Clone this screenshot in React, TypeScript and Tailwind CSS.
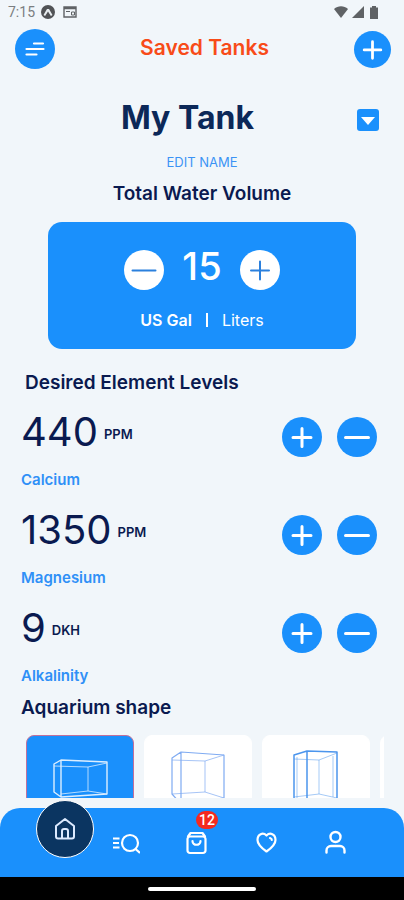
import { useState } from "react";
import type { ReactNode } from "react";

function Plus({ thin = false }: { thin?: boolean }) {
  return (
    <svg viewBox="0 0 40 40" fill="none" stroke="currentColor" strokeWidth={thin ? 2 : 3} strokeLinecap="round" aria-hidden="true">
      <path d="M20 11.500v18M11 20.500h18" />
    </svg>
  );
}

function Minus({ thin = false }: { thin?: boolean }) {
  return (
    <svg viewBox="0 0 40 40" fill="none" stroke="currentColor" strokeWidth={thin ? 2 : 3} strokeLinecap="round" aria-hidden="true">
      <path d="M8.500 20.500h23" />
    </svg>
  );
}

function RoundButton({ label, light = false, onClick, children }: { label: string; light?: boolean; onClick?: () => void; children: ReactNode }) {
  return (
    <button
      type="button"
      aria-label={label}
      onClick={onClick}
      className={`size-10 shrink-0 rounded-full ${light ? "bg-white text-[#2b80dd]" : "bg-[#1a90fc] text-white"}`}
    >
      {children}
    </button>
  );
}

function StatusBar() {
  return (
    <div className="flex h-6 shrink-0 items-center justify-between pr-6 pl-2 text-[#5f6265]">
      <div className="flex items-center gap-1">
        <span className="font-[Roboto,sans-serif] text-[14px] leading-6 text-[#7b7e81]">7:15</span>
        <svg viewBox="0 0 14 14" className="ml-0.5 size-3.5" aria-hidden="true">
          <circle cx="7" cy="7" r="7" fill="#515356" />
          <path d="M2.500 10 6 4h2l3.500 6-1.600 1L7 6.500 4.100 11Z" fill="#e8edf0" />
        </svg>
        <svg viewBox="0 0 14 12" className="ml-1 h-3 w-3.5" fill="none" stroke="currentColor" aria-hidden="true">
          <path d="M1 1h12v10H1zM1 2.500h12" strokeWidth="1.400" />
          <path d="M3 5.500h4M8.500 6h3v3h-3z" />
        </svg>
      </div>
      <div className="flex items-center gap-1">
        <svg viewBox="0 0 14 12" className="h-3 w-3.5" fill="currentColor" aria-hidden="true">
          <path d="M0 3C4-.7 10-.7 14 3L7 12Z" />
        </svg>
        <svg viewBox="0 0 12 12" className="size-3" fill="currentColor" aria-hidden="true">
          <path d="M12 0v12H0Z" />
        </svg>
        <svg viewBox="0 0 12 14" className="h-3.5 w-3" fill="currentColor" aria-hidden="true">
          <path d="M4 1h4v1.500h2V14H2V2.500h2Z" />
        </svg>
      </div>
    </div>
  );
}

function Level({ name, unit, initial }: { name: string; unit: string; initial: number }) {
  const [value, setValue] = useState(initial);
  return (
    <section className="flex h-[98px] items-start justify-between pr-[7px]" aria-label={name}>
      <div className="pl-px">
        <p className="flex items-center gap-1.5">
          <span className="text-[40px] leading-[60px]">{value}</span>
          <span className="pt-1.5 text-[13px] font-semibold">{unit}</span>
        </p>
        <h3 className="mt-2 text-[15px] leading-5 font-semibold text-[#2f90f7]">{name}</h3>
      </div>
      <div className="mt-[15px] flex gap-[15px]">
        <RoundButton label={`Increase ${name}`} onClick={() => setValue(value + 1)}><Plus /></RoundButton>
        <RoundButton label={`Decrease ${name}`} onClick={() => setValue(value - 1)}><Minus /></RoundButton>
      </div>
    </section>
  );
}

function Shape({ label, selected = false, children }: { label: string; selected?: boolean; children?: ReactNode }) {
  return (
    <button
      type="button"
      aria-label={label}
      aria-pressed={selected}
      className={`h-[108px] w-[108px] shrink-0 overflow-hidden rounded-lg border ${selected ? "border-[#c0709c] bg-[#1a90fc]" : "border-white bg-white"}`}
    >
      <svg viewBox="0 0 106 106" className="size-full" fill="none" strokeLinejoin="round" aria-hidden="true">{children}</svg>
    </button>
  );
}

export default function App() {
  const [volume, setVolume] = useState(15);
  const [unit, setUnit] = useState("gal");
  return (
    <div className="flex h-screen flex-col bg-[#f1f6fa] font-[Inter,'Open_Sans',sans-serif] text-[#0a1a50]">
      <StatusBar />
      <header className="flex h-[50px] shrink-0 items-center justify-between pr-[13px] pl-[15px]">
        <button type="button" aria-label="Menu" className="size-10 rounded-full bg-[#1a90fc] text-white">
          <svg viewBox="0 0 40 40" fill="none" stroke="currentColor" strokeWidth="2.200" strokeLinecap="round" aria-hidden="true">
            <path d="M19 14.500h9M11.500 20h17M11.500 25.500h10" />
          </svg>
        </button>
        <h1 className="pb-0.5 text-[21px] leading-7 font-semibold text-[#f84b18]">Saved Tanks</h1>
        <button type="button" aria-label="Add tank" className="size-[37px] rounded-full bg-[#1a90fc] text-white"><Plus /></button>
      </header>

      <main className="mb-2.5 min-h-0 flex-1 overflow-hidden px-5">
        <div className="mt-5 grid grid-cols-[22px_1fr_22px] items-center pr-[5px]">
          <span />
          <h2 className="pr-6 text-center text-[32px] leading-[48px] font-bold text-[#0c2858]">My Tank</h2>
          <button type="button" aria-label="Choose tank" className="mt-1 size-[22px] rounded-[3px] bg-[#1a90fc]">
            <svg viewBox="0 0 22 22" fill="white" aria-hidden="true"><path d="M4 8h14l-7 8Z" /></svg>
          </button>
        </div>
        <button type="button" className="mx-auto mt-2.5 block text-[13px] leading-5 text-[#3b93f5]">EDIT NAME</button>
        <h2 className="mt-2 text-center text-[19px] leading-7 font-semibold">Total Water Volume</h2>

        <section className="mx-7 mt-3.5 h-[127px] rounded-[14px] bg-[#1a90fc] pt-4 text-white" aria-label="Total water volume">
          <div className="flex items-center justify-center gap-[18px]">
            <div className="mt-2 flex"><RoundButton light label="Decrease volume" onClick={() => setVolume(volume - 1)}><Minus thin /></RoundButton></div>
            <span className="text-[38px] leading-14 font-medium">{volume}</span>
            <div className="mt-2 flex"><RoundButton light label="Increase volume" onClick={() => setVolume(volume + 1)}><Plus thin /></RoundButton></div>
          </div>
          <div className="mt-3.5 flex items-center justify-center gap-3.5 text-base leading-6">
            <button type="button" aria-pressed={unit === "gal"} onClick={() => setUnit("gal")} className={unit === "gal" ? "font-semibold" : ""}>US Gal</button>
            <span className="h-3.5 w-0.5 bg-white" />
            <button type="button" aria-pressed={unit === "l"} onClick={() => setUnit("l")} className={unit === "l" ? "font-semibold" : ""}>Liters</button>
          </div>
        </section>

        <h2 className="mt-5 pl-[5px] text-[19px] leading-7 font-semibold">Desired Element Levels</h2>
        <div className="mt-[5px]">
          <Level name="Calcium" unit="PPM" initial={440} />
          <Level name="Magnesium" unit="PPM" initial={1350} />
          <Level name="Alkalinity" unit="DKH" initial={9} />
        </div>
        <h2 className="pl-px text-[19px] leading-6 font-semibold">Aquarium shape</h2>
        <div className="mt-[15px] ml-1.5 flex gap-2.5 overflow-hidden">
          <Shape label="Rectangular" selected>
            <g stroke="#dceeff" strokeWidth="1.400">
              <path d="M27 28 34 24 80 26V58L34 61 27 56ZM34 24V61" />
              <path d="M27 30 61 31 80 27M34 58 61 55 80 58M61 31V55" strokeWidth="0.800" />
            </g>
          </Shape>
          <Shape label="Bow front">
            <g stroke="#7fabf2" strokeWidth="1.200">
              <path d="M27 22 36 16 79 19V62L36 68 27 58ZM36 16V68" />
              <path d="M27 24 60 25 79 19M27 58 60 56 79 62M60 25V56" strokeWidth="0.700" />
            </g>
          </Shape>
          <Shape label="Tall">
            <g stroke="#4b95ed" strokeWidth="1.500">
              <path d="M31 19 44 15 74 16V82L44 86 31 81ZM44 15V86" />
              <path d="M31 23 56 24 74 17M31 61 56 58 74 62M56 24V58M34 21V62M70 20V61" strokeWidth="0.500" />
            </g>
          </Shape>
          <Shape label="Cube" />
        </div>
      </main>

      <nav aria-label="Main" className="relative flex h-[69px] shrink-0 items-center rounded-t-[20px] bg-[#1a90fc] pr-[54px] pl-[112px] text-white">
        <button type="button" aria-label="Home" className="absolute -top-2 left-9 grid size-[58px] place-items-center rounded-full border border-white bg-[#0b3561] text-[#dceaff]">
          <svg viewBox="0 0 24 24" className="size-6" fill="none" stroke="currentColor" strokeWidth="2" strokeLinejoin="round" strokeLinecap="round" aria-hidden="true">
            <path d="M3 9 12 2l9 7v10.500a2 2 0 0 1-2 2H5a2 2 0 0 1-2-2ZM9 21.500V14a2 2 0 0 1 2-2h2a2 2 0 0 1 2 2v7.500" />
          </svg>
        </button>
        <div className="flex flex-1 items-center justify-between">
          <button type="button" aria-label="Search">
            <svg viewBox="0 0 28 28" className="size-7" fill="none" stroke="currentColor" strokeWidth="2.200" aria-hidden="true">
              <circle cx="18" cy="14" r="8" /><path d="m23.500 20 4.500 4M1 9.500h6.500M1 14h6M1 18.500h6.500" />
            </svg>
          </button>
          <button type="button" aria-label="Cart, 12 items" className="relative">
            <svg viewBox="0 0 28 28" className="size-7" fill="none" stroke="currentColor" strokeWidth="2.200" strokeLinejoin="round" strokeLinecap="round" aria-hidden="true">
              <path d="M6 7.500 8.500 4h12L23 7.500M8 7.500h13a2.500 2.500 0 0 1 2.500 2.500v11.500A2.500 2.500 0 0 1 21 24H8a2.500 2.500 0 0 1-2.500-2.500V10A2.500 2.500 0 0 1 8 7.500ZM10.500 12c0 5 8 5 8 0" />
            </svg>
            <span className="absolute -top-[18px] left-[14px] h-[18px] w-[22px] rounded-full bg-[#f52a20] text-center font-[Roboto,sans-serif] text-sm leading-[18px] font-medium">12</span>
          </button>
          <button type="button" aria-label="Favourites">
            <svg viewBox="0 0 28 28" className="size-7" fill="none" stroke="currentColor" strokeWidth="2.200" strokeLinejoin="round" strokeLinecap="round" aria-hidden="true">
              <path d="M14.500 6.500C11 3 5.500 5 5.500 11c0 4 4 8 9 11.500 5-3.500 9-7.500 9-11.500 0-6-5.500-8-9-4.500ZM18 9q1.800.5 1.800 2" />
            </svg>
          </button>
          <button type="button" aria-label="Profile">
            <svg viewBox="0 0 28 28" className="size-7" fill="none" stroke="currentColor" strokeWidth="2.400" strokeLinecap="round" aria-hidden="true">
              <circle cx="13.500" cy="8" r="5" /><path d="M4.500 23.500v-2c0-2.500 2-4.500 4.500-4.500h9c2.500 0 4.500 2 4.500 4.500v2" />
            </svg>
          </button>
        </div>
      </nav>
      <div className="flex h-[23px] shrink-0 items-center justify-center bg-black">
        <div className="h-1 w-[108px] rounded-full bg-white" />
      </div>
    </div>
  );
}
